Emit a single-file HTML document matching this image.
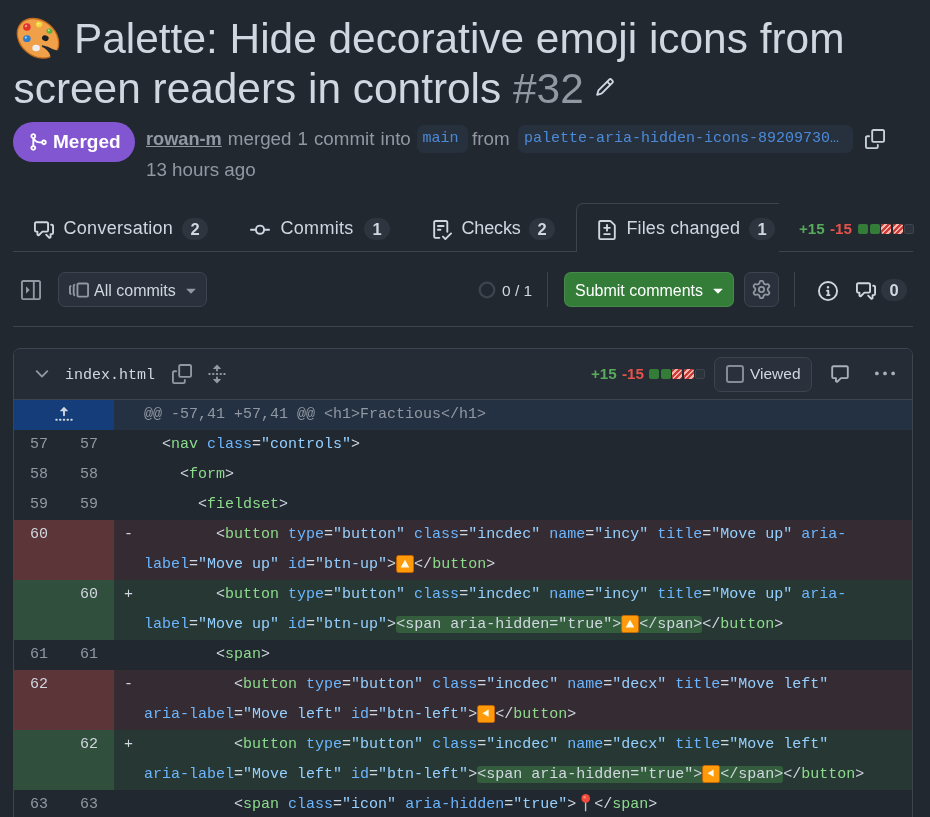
<!DOCTYPE html>
<html><head><meta charset="utf-8"><style>
*{box-sizing:border-box;margin:0;padding:0}
html,body{width:930px;height:817px;overflow:hidden;background:#212830;color:#d1d7e0;font-family:"Liberation Sans",sans-serif}
.abs{position:absolute}
#root{position:absolute;left:0;top:0;width:930px;height:817px;will-change:transform}
.counter{height:22px;border-radius:11px;background:#2f353e;font-weight:bold;font-size:16.5px;text-align:center;line-height:22px;color:#d1d7e0}
.btn{border:1px solid #3d444d;background:#2a313c;border-radius:7px}
.mono{font-family:"Liberation Mono",monospace;font-size:15px;line-height:30px;height:30px;white-space:pre;color:#d1d7e0}
.t{color:#8ddb8c}.a{color:#6cb6ff}.s{color:#96d0ff}
.hl{background:#335d3d;border-radius:3px}
</style></head><body><div id="root">
<svg class="abs" style="left:0px;top:0px" width="70" height="70" viewBox="0 0 70 70"><ellipse cx="38" cy="38.3" rx="22.6" ry="17.6" transform="rotate(40 38 38.3)" fill="#f0a048" stroke="#c06a1c" stroke-width="1.3"/><path d="M42.3 45.2 Q48 46.2 53 49.3 Q57 51 62 51 L64 64 L50 64 Q51.5 58 49.5 53.5 Q46.5 48.5 42.3 47 Q41.2 46 42.3 45.2Z" fill="#212830"/><ellipse cx="45.3" cy="38.2" rx="3.4" ry="2.8" transform="rotate(20 45.3 38.2)" fill="#1c1f24"/><circle cx="26.9" cy="27" r="3.8" fill="#e0332c"/><circle cx="26" cy="26" r="1.2" fill="#ff9a90"/><ellipse cx="39" cy="24.4" rx="3.2" ry="2.8" fill="#f3d63a"/><circle cx="38.3" cy="23.7" r="1" fill="#fff4a0"/><ellipse cx="49.5" cy="31.1" rx="3" ry="2.7" fill="#5bb03c"/><circle cx="48.8" cy="30.3" r="0.9" fill="#c8f0a0"/><ellipse cx="26.9" cy="38.7" rx="3.8" ry="3.4" fill="#2c7dd0"/><circle cx="25.8" cy="37.6" r="1.1" fill="#a8d8ff"/><ellipse cx="36.1" cy="48" rx="3.8" ry="3.2" fill="#eeeef0"/></svg>
<div class="abs" style="left:74px;top:14px;font-size:42.4px;line-height:50px;color:#d1d7e0;font-weight:normal;white-space:pre;">Palette: Hide decorative emoji icons from</div>
<div class="abs" style="left:13.5px;top:64px;font-size:42.4px;line-height:50px;color:#d1d7e0;font-weight:normal;white-space:pre;">screen readers in controls <span style="color:#9198a1">#32</span></div>
<svg class="abs" style="left:595px;top:77px" width="20" height="20" viewBox="0 0 16 16" fill="#d1d7e0"><path d="M11.013 1.427a1.75 1.75 0 0 1 2.474 0l1.086 1.086a1.75 1.75 0 0 1 0 2.474l-8.61 8.61c-.21.21-.47.364-.756.445l-3.251.93a.75.75 0 0 1-.927-.928l.929-3.25c.081-.286.235-.547.445-.758l8.61-8.61Zm.176 4.823L9.75 4.81l-6.286 6.287a.253.253 0 0 0-.064.108l-.558 1.953 1.953-.558a.253.253 0 0 0 .108-.064Zm1.238-3.763a.25.25 0 0 0-.354 0L10.811 3.75l1.439 1.44 1.263-1.263a.25.25 0 0 0 0-.354Z"/></svg>
<div class="abs" style="left:13px;top:122px;width:122px;height:40px;border-radius:20px;background:#8256d0"></div>
<svg class="abs" style="left:27.7px;top:132.3px" width="20" height="20" viewBox="0 0 16 16" fill="#ffffff"><path d="M5.45 5.154A4.25 4.25 0 0 0 9.25 7.5h1.378a2.251 2.251 0 1 1 0 1.5H9.25A5.734 5.734 0 0 1 5 7.123v3.505a2.25 2.25 0 1 1-1.5 0V5.372a2.25 2.25 0 1 1 1.95-.218ZM4.25 13.5a.75.75 0 1 0 0-1.5.75.75 0 0 0 0 1.5Zm8.5-4.5a.75.75 0 1 0 0-1.5.75.75 0 0 0 0 1.5ZM5 3.25a.75.75 0 1 0 0 .005V3.25Z"/></svg>
<div class="abs" style="left:53px;top:129.5px;font-size:19px;line-height:24px;color:#ffffff;font-weight:bold;white-space:pre;">Merged</div>
<div class="abs" style="left:146px;top:127px;font-size:18.8px;line-height:24px;color:#9198a1;font-weight:normal;white-space:pre;word-spacing:0.8px"><span style="font-weight:bold;text-decoration:underline;font-size:18.2px">rowan-m</span> merged 1 commit into</div>
<div class="abs" style="left:417px;top:125px;width:51px;height:28px;border-radius:7px;background:#27313e"></div>
<div class="abs" style="left:422.5px;top:128px;font-size:15px;line-height:22px;color:#4c8ad8;font-weight:normal;white-space:pre;font-family:'Liberation Mono',monospace">main</div>
<div class="abs" style="left:472px;top:127px;font-size:18.8px;line-height:24px;color:#9198a1;font-weight:normal;white-space:pre;">from</div>
<div class="abs" style="left:518px;top:125px;width:335px;height:28px;border-radius:7px;background:#27313e"></div>
<div class="abs" style="left:524px;top:128px;font-size:15px;line-height:22px;color:#4c8ad8;font-weight:normal;white-space:pre;font-family:'Liberation Mono',monospace">palette-aria-hidden-icons-89209730…</div>
<svg class="abs" style="left:865px;top:129px" width="20" height="20" viewBox="0 0 16 16" fill="#c9cfd7"><path d="M0 6.75C0 5.784.784 5 1.75 5h1.5a.75.75 0 0 1 0 1.5h-1.5a.25.25 0 0 0-.25.25v7.5c0 .138.112.25.25.25h7.5a.25.25 0 0 0 .25-.25v-1.5a.75.75 0 0 1 1.5 0v1.5A1.75 1.75 0 0 1 9.25 16h-7.5A1.75 1.75 0 0 1 0 14.25ZM5 1.75C5 .784 5.784 0 6.75 0h7.5C15.216 0 16 .784 16 1.75v7.5A1.75 1.75 0 0 1 14.25 11h-7.5A1.75 1.75 0 0 1 5 9.25Zm1.75-.25a.25.25 0 0 0-.25.25v7.5c0 .138.112.25.25.25h7.5a.25.25 0 0 0 .25-.25v-7.5a.25.25 0 0 0-.25-.25Z"/></svg>
<div class="abs" style="left:146px;top:158px;font-size:18.8px;line-height:24px;color:#9198a1;font-weight:normal;white-space:pre;">13 hours ago</div>
<div class="abs" style="left:13px;top:251px;width:900px;height:1px;background:#3d444d"></div>
<div class="abs" style="left:576px;top:203px;width:203px;height:49px;border-top:1px solid #3d444d;border-left:1px solid #3d444d;border-top-left-radius:7px;background:#212830"></div>
<svg class="abs" style="left:34px;top:220px" width="20" height="20" viewBox="0 0 16 16" fill="#d1d7e0"><path d="M1.75 1h8.5c.966 0 1.75.784 1.75 1.75v5.5A1.75 1.75 0 0 1 10.25 10H7.061l-2.574 2.573A1.458 1.458 0 0 1 2 11.543V10h-.25A1.75 1.75 0 0 1 0 8.25v-5.5C0 1.784.784 1 1.75 1ZM1.5 2.75v5.5c0 .138.112.25.25.25h1a.75.75 0 0 1 .75.75v2.19l2.72-2.72a.749.749 0 0 1 .53-.22h3.5a.25.25 0 0 0 .25-.25v-5.5a.25.25 0 0 0-.25-.25h-8.5a.25.25 0 0 0-.25.25Zm13 2a.25.25 0 0 0-.25-.25h-.5a.75.75 0 0 1 0-1.5h.5c.966 0 1.75.784 1.75 1.75v5.5A1.75 1.75 0 0 1 14.25 12H14v1.543a1.458 1.458 0 0 1-2.487 1.03L9.22 12.28a.749.749 0 0 1 .326-1.275.749.749 0 0 1 .734.215l2.22 2.22v-2.19a.75.75 0 0 1 .75-.75h1a.25.25 0 0 0 .25-.25Z"/></svg>
<div class="abs" style="left:63.5px;top:216px;font-size:18px;line-height:24px;color:#d1d7e0;font-weight:normal;white-space:pre;letter-spacing:0.3px">Conversation</div>
<div class="abs counter" style="left:182px;top:218px;width:26px">2</div>
<svg class="abs" style="left:250px;top:220px" width="20" height="20" viewBox="0 0 16 16" fill="#d1d7e0"><path d="M11.93 8.5a4.002 4.002 0 0 1-7.86 0H.75a.75.75 0 0 1 0-1.5h3.32a4.002 4.002 0 0 1 7.86 0h3.32a.75.75 0 0 1 0 1.5Zm-1.43-.75a2.5 2.5 0 1 0-5 0 2.5 2.5 0 0 0 5 0Z"/></svg>
<div class="abs" style="left:280.5px;top:216px;font-size:18px;line-height:24px;color:#d1d7e0;font-weight:normal;white-space:pre;letter-spacing:0.3px">Commits</div>
<div class="abs counter" style="left:364px;top:218px;width:26px">1</div>
<svg class="abs" style="left:432px;top:220px" width="20" height="20" viewBox="0 0 16 16" fill="#d1d7e0"><path d="M2.5 1.75v11.5c0 .138.112.25.25.25h3.17a.75.75 0 0 1 0 1.5H2.75A1.75 1.75 0 0 1 1 13.25V1.75C1 .784 1.784 0 2.75 0h8.5C12.216 0 13 .784 13 1.75v7.736a.75.75 0 0 1-1.5 0V1.75a.25.25 0 0 0-.25-.25h-8.5a.25.25 0 0 0-.25.25Zm13.274 9.537v-.001l-4.557 4.45a.75.75 0 0 1-1.055-.008l-1.943-1.95a.75.75 0 0 1 1.062-1.058l1.419 1.425 4.026-3.932a.75.75 0 1 1 1.048 1.074ZM4.75 4h4.5a.75.75 0 0 1 0 1.5h-4.5a.75.75 0 0 1 0-1.5ZM4 7.75A.75.75 0 0 1 4.75 7h2a.75.75 0 0 1 0 1.5h-2A.75.75 0 0 1 4 7.75Z"/></svg>
<div class="abs" style="left:461.5px;top:216px;font-size:18px;line-height:24px;color:#d1d7e0;font-weight:normal;white-space:pre;letter-spacing:-0.15px">Checks</div>
<div class="abs counter" style="left:529px;top:218px;width:26px">2</div>
<svg class="abs" style="left:597px;top:220px" width="20" height="20" viewBox="0 0 16 16" fill="#d1d7e0"><path d="M1 1.75C1 .784 1.784 0 2.75 0h7.586c.464 0 .909.184 1.237.513l2.914 2.914c.329.328.513.773.513 1.237v9.586A1.75 1.75 0 0 1 13.25 16H2.75A1.75 1.75 0 0 1 1 14.25Zm1.75-.25a.25.25 0 0 0-.25.25v12.5c0 .138.112.25.25.25h10.5a.25.25 0 0 0 .25-.25V4.664a.25.25 0 0 0-.073-.177l-2.914-2.914a.25.25 0 0 0-.177-.073ZM8 3.25a.75.75 0 0 1 .75.75v1.5h1.5a.75.75 0 0 1 0 1.5h-1.5v1.5a.75.75 0 0 1-1.5 0V7h-1.5a.75.75 0 0 1 0-1.5h1.5V4A.75.75 0 0 1 8 3.25Zm-3 8a.75.75 0 0 1 .75-.75h4.5a.75.75 0 0 1 0 1.5h-4.5a.75.75 0 0 1-.75-.75Z"/></svg>
<div class="abs" style="left:626.5px;top:216px;font-size:18px;line-height:24px;color:#d1d7e0;font-weight:normal;white-space:pre;letter-spacing:0.12px">Files changed</div>
<div class="abs counter" style="left:749px;top:218px;width:26px">1</div>
<div class="abs" style="left:799px;top:219px;font-size:15.2px;line-height:20px;color:#d1d7e0;font-weight:normal;white-space:pre;word-spacing:1px"><b style="color:#57ab5a">+15</b> <b style="color:#e5534b">-15</b></div>
<div class="abs" style="left:858.0px;top:224px;width:10px;height:10px;border-radius:2px;background:#347d39"></div><div class="abs" style="left:869.5px;top:224px;width:10px;height:10px;border-radius:2px;background:#347d39"></div><div class="abs" style="left:881.0px;top:224px;width:10px;height:10px;border-radius:2px;background:repeating-linear-gradient(-45deg,#c93c37 0px,#c93c37 2px,#f5b3ab 2px,#f5b3ab 3.8px)"></div><div class="abs" style="left:892.5px;top:224px;width:10px;height:10px;border-radius:2px;background:repeating-linear-gradient(-45deg,#c93c37 0px,#c93c37 2px,#f5b3ab 2px,#f5b3ab 3.8px)"></div><div class="abs" style="left:904.0px;top:224px;width:10px;height:10px;border-radius:2px;background:#2d333b;border:1px solid #3d444d"></div>
<svg class="abs" style="left:21px;top:280px" width="20" height="20" viewBox="0 0 16 16" fill="#9198a1"><path d="M6.823 7.823a.25.25 0 0 1 0 .354l-2.396 2.396A.25.25 0 0 1 4 10.396V5.604a.25.25 0 0 1 .427-.177ZM1.75 0h12.5C15.216 0 16 .784 16 1.75v12.5A1.75 1.75 0 0 1 14.25 16H1.75A1.75 1.75 0 0 1 0 14.25V1.75C0 .784.784 0 1.75 0ZM1.5 1.75v12.5c0 .138.112.25.25.25H9.5v-13H1.75a.25.25 0 0 0-.25.25ZM11 14.5h3.25a.25.25 0 0 0 .25-.25V1.75a.25.25 0 0 0-.25-.25H11Z"/></svg>
<div class="abs btn" style="left:58px;top:272px;width:149px;height:35px"></div>
<svg class="abs" style="left:69px;top:280px" width="20" height="20" viewBox="0 0 16 16" fill="#9198a1"><path d="M7.75 14A1.75 1.75 0 0 1 6 12.25v-8.5C6 2.784 6.784 2 7.75 2h6.5c.966 0 1.75.784 1.75 1.75v8.5A1.75 1.75 0 0 1 14.25 14Zm-.25-1.75c0 .138.112.25.25.25h6.5a.25.25 0 0 0 .25-.25v-8.5a.25.25 0 0 0-.25-.25h-6.5a.25.25 0 0 0-.25.25ZM4.9 3.508a.75.75 0 0 1-.274 1.025.249.249 0 0 0-.126.217v6.5c0 .09.048.173.126.217a.75.75 0 0 1-.752 1.298A1.75 1.75 0 0 1 3 11.25v-6.5c0-.649.353-1.214.874-1.516a.75.75 0 0 1 1.025.274ZM1.625 5.533h.001a.249.249 0 0 0-.126.217v4.5c0 .09.048.173.126.217a.75.75 0 0 1-.752 1.298A1.748 1.748 0 0 1 0 10.25v-4.5a1.748 1.748 0 0 1 .873-1.516.75.75 0 1 1 .752 1.299Z"/></svg>
<div class="abs" style="left:94px;top:279.5px;font-size:16px;line-height:22px;color:#d1d7e0;font-weight:normal;white-space:pre;">All commits</div>
<svg class="abs" style="left:181px;top:280px" width="20" height="20" viewBox="0 0 16 16" fill="#9198a1"><path d="m4.427 7.427 3.396 3.396a.25.25 0 0 0 .354 0l3.396-3.396A.25.25 0 0 0 11.396 7H4.604a.25.25 0 0 0-.177.427Z"/></svg>
<svg class="abs" style="left:477.8px;top:280.6px" width="18" height="18" viewBox="0 0 18 18"><circle cx="9" cy="9" r="7.3" fill="none" stroke="#3d444d" stroke-width="2.3"/></svg>
<div class="abs" style="left:502px;top:280px;font-size:15.5px;line-height:22px;color:#d1d7e0;font-weight:normal;white-space:pre;">0 / 1</div>
<div class="abs" style="left:547px;top:272px;width:1px;height:35px;background:#3d444d"></div>
<div class="abs" style="left:564px;top:272px;width:170px;height:35px;border-radius:7px;background:#347d39;border:1px solid rgba(255,255,255,0.1)"></div>
<div class="abs" style="left:575px;top:280px;font-size:16px;line-height:22px;color:#ffffff;font-weight:normal;white-space:pre;">Submit comments</div>
<svg class="abs" style="left:708px;top:280px" width="20" height="20" viewBox="0 0 16 16" fill="#ffffff"><path d="m4.427 7.427 3.396 3.396a.25.25 0 0 0 .354 0l3.396-3.396A.25.25 0 0 0 11.396 7H4.604a.25.25 0 0 0-.177.427Z"/></svg>
<div class="abs btn" style="left:744px;top:272px;width:35px;height:35px"></div>
<svg class="abs" style="left:752px;top:280px" width="19" height="19" viewBox="0 0 16 16" fill="#9198a1"><path d="M8 0a8.2 8.2 0 0 1 .701.031C9.444.095 9.99.645 10.16 1.29l.288 1.107c.018.066.079.158.212.224.231.114.454.243.668.386.123.082.233.09.299.071l1.103-.303c.644-.176 1.392.021 1.82.63.27.385.506.792.704 1.218.315.675.111 1.422-.364 1.891l-.814.806c-.049.048-.098.147-.088.294.016.257.016.515 0 .772-.01.147.038.246.088.294l.814.806c.475.469.679 1.216.364 1.891a7.977 7.977 0 0 1-.704 1.217c-.428.61-1.176.807-1.82.63l-1.102-.302c-.067-.019-.177-.011-.3.071a5.909 5.909 0 0 1-.668.386c-.133.066-.194.158-.211.224l-.29 1.106c-.168.646-.715 1.196-1.458 1.26a8.006 8.006 0 0 1-1.402 0c-.743-.064-1.289-.614-1.458-1.26l-.289-1.106c-.018-.066-.079-.158-.212-.224a5.738 5.738 0 0 1-.668-.386c-.123-.082-.233-.09-.299-.071l-1.103.303c-.644.176-1.392-.021-1.82-.63a8.12 8.12 0 0 1-.704-1.218c-.315-.675-.111-1.422.363-1.891l.815-.806c.05-.048.098-.147.088-.294a6.214 6.214 0 0 1 0-.772c.01-.147-.038-.246-.088-.294l-.815-.806C.635 6.045.431 5.298.746 4.623a7.92 7.92 0 0 1 .704-1.217c.428-.61 1.176-.807 1.820-.63l1.102.302c.067.019.177.011.3-.071.214-.143.437-.272.668-.386.133-.066.194-.158.211-.224l.29-1.106C6.009.645 6.556.095 7.299.03 7.53.01 7.764 0 8 0Zm-.571 1.525c-.036.003-.108.036-.137.146l-.289 1.105c-.147.561-.549.967-.998 1.189-.173.086-.34.183-.5.29-.417.278-.97.423-1.529.27l-1.103-.303c-.109-.03-.175.016-.195.045-.22.312-.412.644-.573.99-.014.031-.021.11.059.19l.815.806c.411.406.562.957.53 1.456a4.709 4.709 0 0 0 0 .582c.032.499-.119 1.05-.53 1.456l-.815.806c-.081.08-.073.159-.059.19.162.346.353.677.573.989.02.03.085.076.195.046l1.102-.303c.56-.153 1.113-.008 1.53.27.161.107.328.204.501.29.447.222.85.629.997 1.189l.289 1.105c.029.109.101.143.137.146a6.6 6.6 0 0 0 1.142 0c.036-.003.108-.036.137-.146l.289-1.105c.147-.561.549-.967.998-1.189.173-.086.34-.183.5-.29.417-.278.97-.423 1.529-.27l1.103.303c.109.029.175-.016.195-.045.22-.313.411-.644.573-.99.014-.031.021-.11-.059-.19l-.815-.806c-.411-.406-.562-.957-.53-1.456a4.709 4.709 0 0 0 0-.582c-.032-.499.119-1.05.53-1.456l.815-.806c.081-.08.073-.159.059-.19a6.464 6.464 0 0 0-.573-.989c-.02-.03-.085-.076-.195-.046l-1.102.303c-.56.153-1.113.008-1.53-.27a4.44 4.44 0 0 0-.501-.29c-.447-.222-.85-.629-.997-1.189l-.289-1.105c-.029-.11-.101-.143-.137-.146a6.6 6.6 0 0 0-1.142 0ZM11 8a3 3 0 1 1-6 0 3 3 0 0 1 6 0ZM9.5 8a1.5 1.5 0 1 0-3.001.001A1.5 1.5 0 0 0 9.5 8Z"/></svg>
<div class="abs" style="left:794px;top:272px;width:1px;height:35px;background:#3d444d"></div>
<svg class="abs" style="left:818px;top:281px" width="20" height="20" viewBox="0 0 16 16" fill="#d1d7e0"><path d="M0 8a8 8 0 1 1 16 0A8 8 0 0 1 0 8Zm8-6.5a6.5 6.5 0 1 0 0 13 6.5 6.5 0 0 0 0-13ZM6.5 7.75A.75.75 0 0 1 7.25 7h1a.75.75 0 0 1 .75.75v2.75h.25a.75.75 0 0 1 0 1.5h-2a.75.75 0 0 1 0-1.5h.25v-2h-.25a.75.75 0 0 1-.75-.75ZM8 6a1 1 0 1 1 0-2 1 1 0 0 1 0 2Z"/></svg>
<svg class="abs" style="left:856px;top:281px" width="20" height="20" viewBox="0 0 16 16" fill="#d1d7e0"><path d="M1.75 1h8.5c.966 0 1.75.784 1.75 1.75v5.5A1.75 1.75 0 0 1 10.25 10H7.061l-2.574 2.573A1.458 1.458 0 0 1 2 11.543V10h-.25A1.75 1.75 0 0 1 0 8.25v-5.5C0 1.784.784 1 1.75 1ZM1.5 2.75v5.5c0 .138.112.25.25.25h1a.75.75 0 0 1 .75.75v2.19l2.72-2.72a.749.749 0 0 1 .53-.22h3.5a.25.25 0 0 0 .25-.25v-5.5a.25.25 0 0 0-.25-.25h-8.5a.25.25 0 0 0-.25.25Zm13 2a.25.25 0 0 0-.25-.25h-.5a.75.75 0 0 1 0-1.5h.5c.966 0 1.75.784 1.75 1.75v5.5A1.75 1.75 0 0 1 14.25 12H14v1.543a1.458 1.458 0 0 1-2.487 1.03L9.22 12.28a.749.749 0 0 1 .326-1.275.749.749 0 0 1 .734.215l2.22 2.22v-2.19a.75.75 0 0 1 .75-.75h1a.25.25 0 0 0 .25-.25Z"/></svg>
<div class="abs counter" style="left:881px;top:279px;width:26px">0</div>
<div class="abs" style="left:13px;top:326px;width:900px;height:1px;background:#3d444d"></div>
<div class="abs" style="left:13px;top:348px;width:900px;height:480px;border:1px solid #3d444d;border-radius:7px 7px 0 0;background:#212830"></div>
<div class="abs" style="left:14px;top:349px;width:898px;height:51px;background:#262c36;border-radius:6px 6px 0 0;border-bottom:1px solid #3d444d"></div>
<svg class="abs" style="left:32px;top:364px" width="20" height="20" viewBox="0 0 16 16" fill="#9198a1"><path d="M12.78 5.22a.749.749 0 0 1 0 1.06l-4.25 4.25a.749.749 0 0 1-1.06 0L3.22 6.28a.749.749 0 1 1 1.06-1.06L8 8.94l3.72-3.72a.749.749 0 0 1 1.06 0Z"/></svg>
<div class="abs" style="left:65px;top:365px;font-size:15px;line-height:22px;color:#d1d7e0;font-weight:normal;white-space:pre;font-family:'Liberation Mono',monospace">index.html</div>
<svg class="abs" style="left:172px;top:364px" width="20" height="20" viewBox="0 0 16 16" fill="#9198a1"><path d="M0 6.75C0 5.784.784 5 1.75 5h1.5a.75.75 0 0 1 0 1.5h-1.5a.25.25 0 0 0-.25.25v7.5c0 .138.112.25.25.25h7.5a.25.25 0 0 0 .25-.25v-1.5a.75.75 0 0 1 1.5 0v1.5A1.75 1.75 0 0 1 9.25 16h-7.5A1.75 1.75 0 0 1 0 14.25ZM5 1.75C5 .784 5.784 0 6.75 0h7.5C15.216 0 16 .784 16 1.75v7.5A1.75 1.75 0 0 1 14.25 11h-7.5A1.75 1.75 0 0 1 5 9.25Zm1.75-.25a.25.25 0 0 0-.25.25v7.5c0 .138.112.25.25.25h7.5a.25.25 0 0 0 .25-.25v-7.5a.25.25 0 0 0-.25-.25Z"/></svg>
<svg class="abs" style="left:207px;top:364px" width="20" height="20" viewBox="0 0 16 16" fill="#9198a1"><path d="m8.177.677 2.896 2.896a.25.25 0 0 1-.177.427H8.75v1.25a.75.75 0 0 1-1.5 0V4H5.104a.25.25 0 0 1-.177-.427L7.823.677a.25.25 0 0 1 .354 0ZM7.25 10.75a.75.75 0 0 1 1.5 0V12h2.146a.25.25 0 0 1 .177.427l-2.896 2.896a.25.25 0 0 1-.354 0l-2.896-2.896A.25.25 0 0 1 5.104 12H7.25v-1.25Zm-5-2a.75.75 0 0 0 0-1.5h-.5a.75.75 0 0 0 0 1.5h.5ZM6 8a.75.75 0 0 1-.75.75h-.5a.75.75 0 0 1 0-1.5h.5A.75.75 0 0 1 6 8Zm2.25.75a.75.75 0 0 0 0-1.5h-.5a.75.75 0 0 0 0 1.5h.5ZM12 8a.75.75 0 0 1-.75.75h-.5a.75.75 0 0 1 0-1.5h.5A.75.75 0 0 1 12 8Zm2.25.75a.75.75 0 0 0 0-1.5h-.5a.75.75 0 0 0 0 1.5h.5Z"/></svg>
<div class="abs" style="left:591px;top:364px;font-size:15.2px;line-height:20px;color:#d1d7e0;font-weight:normal;white-space:pre;word-spacing:1px"><b style="color:#57ab5a">+15</b> <b style="color:#e5534b">-15</b></div>
<div class="abs" style="left:649.0px;top:369px;width:10px;height:10px;border-radius:2px;background:#347d39"></div><div class="abs" style="left:660.5px;top:369px;width:10px;height:10px;border-radius:2px;background:#347d39"></div><div class="abs" style="left:672.0px;top:369px;width:10px;height:10px;border-radius:2px;background:repeating-linear-gradient(-45deg,#c93c37 0px,#c93c37 2px,#f5b3ab 2px,#f5b3ab 3.8px)"></div><div class="abs" style="left:683.5px;top:369px;width:10px;height:10px;border-radius:2px;background:repeating-linear-gradient(-45deg,#c93c37 0px,#c93c37 2px,#f5b3ab 2px,#f5b3ab 3.8px)"></div><div class="abs" style="left:695.0px;top:369px;width:10px;height:10px;border-radius:2px;background:#2d333b;border:1px solid #3d444d"></div>
<div class="abs btn" style="left:714px;top:357px;width:98px;height:35px"></div>
<div class="abs" style="left:726px;top:365px;width:18px;height:18px;border:2px solid #858c96;border-radius:3px"></div>
<div class="abs" style="left:750px;top:363px;font-size:15.5px;line-height:22px;color:#d1d7e0;font-weight:normal;white-space:pre;">Viewed</div>
<svg class="abs" style="left:830px;top:364px" width="20" height="20" viewBox="0 0 16 16" fill="#a9b0b8"><path d="M1 2.75C1 1.784 1.784 1 2.75 1h10.5c.966 0 1.75.784 1.75 1.75v7.5A1.75 1.75 0 0 1 13.25 12H9.06l-2.573 2.573A1.458 1.458 0 0 1 4 13.543V12H2.75A1.75 1.75 0 0 1 1 10.25Zm1.75-.25a.25.25 0 0 0-.25.25v7.5c0 .138.112.25.25.25h2a.75.75 0 0 1 .75.75v2.19l2.72-2.72a.749.749 0 0 1 .53-.22h4.5a.25.25 0 0 0 .25-.25v-7.5a.25.25 0 0 0-.25-.25Z"/></svg>
<svg class="abs" style="left:875px;top:364px" width="20" height="20" viewBox="0 0 16 16" fill="#a9b0b8"><path d="M8 9a1.5 1.5 0 1 0 0-3 1.5 1.5 0 0 0 0 3ZM1.5 9a1.5 1.5 0 1 0 0-3 1.5 1.5 0 0 0 0 3Zm13 0a1.5 1.5 0 1 0 0-3 1.5 1.5 0 0 0 0 3Z"/></svg>
<div class="abs" style="left:14px;top:400px;width:898px;height:30px;background:#243142"></div>
<div class="abs" style="left:14px;top:400px;width:100px;height:30px;background:#143d79"></div>
<svg class="abs" style="left:53.8px;top:405.1px" width="20" height="20" viewBox="0 0 16 16" fill="#d1d7e0"><path d="M7.823 1.677 4.927 4.573A.25.25 0 0 0 5.104 5H7.25v3.236a.75.75 0 1 0 1.5 0V5h2.146a.25.25 0 0 0 .177-.427L8.177 1.677a.25.25 0 0 0-.354 0ZM13.75 11a.75.75 0 0 0 0 1.5h.5a.75.75 0 0 0 0-1.5h-.5Zm-3.75.75a.75.75 0 0 1 .75-.75h.5a.75.75 0 0 1 0 1.5h-.5a.75.75 0 0 1-.75-.75ZM7.75 11a.75.75 0 0 0 0 1.5h.5a.75.75 0 0 0 0-1.5h-.5ZM4 11.75a.75.75 0 0 1 .75-.75h.5a.75.75 0 0 1 0 1.5h-.5a.75.75 0 0 1-.75-.75ZM1.75 11a.75.75 0 0 0 0 1.5h.5a.75.75 0 0 0 0-1.5h-.5Z"/></svg>
<div class="abs mono" style="left:144px;top:400px;color:#9198a1">@@ -57,41 +57,41 @@ &lt;h1&gt;Fractious&lt;/h1&gt;</div>
<div class="abs" style="left:14px;top:430px;width:898px;height:30px;background:#212830"></div><div class="abs mono" style="left:14px;top:430px;width:50px;padding-right:16px;text-align:right;color:#9198a1">57</div><div class="abs mono" style="left:64px;top:430px;width:50px;padding-right:16px;text-align:right;color:#9198a1">57</div><div class="abs mono" style="left:144px;top:430px">  &lt;<span class="t">nav</span> <span class="a">class</span>=<span class="s">"controls"</span>&gt;</div>
<div class="abs" style="left:14px;top:460px;width:898px;height:30px;background:#212830"></div><div class="abs mono" style="left:14px;top:460px;width:50px;padding-right:16px;text-align:right;color:#9198a1">58</div><div class="abs mono" style="left:64px;top:460px;width:50px;padding-right:16px;text-align:right;color:#9198a1">58</div><div class="abs mono" style="left:144px;top:460px">    &lt;<span class="t">form</span>&gt;</div>
<div class="abs" style="left:14px;top:490px;width:898px;height:30px;background:#212830"></div><div class="abs mono" style="left:14px;top:490px;width:50px;padding-right:16px;text-align:right;color:#9198a1">59</div><div class="abs mono" style="left:64px;top:490px;width:50px;padding-right:16px;text-align:right;color:#9198a1">59</div><div class="abs mono" style="left:144px;top:490px">      &lt;<span class="t">fieldset</span>&gt;</div>
<div class="abs" style="left:14px;top:520px;width:898px;height:60px;background:#352c33"></div><div class="abs" style="left:14px;top:520px;width:100px;height:60px;background:#5c3538"></div><div class="abs mono" style="left:14px;top:520px;width:50px;padding-right:16px;text-align:right;color:#d1d7e0">60</div><div class="abs mono" style="left:124px;top:520px">-</div><div class="abs mono" style="left:144px;top:520px">        &lt;<span class="t">button</span> <span class="a">type</span>=<span class="s">"button"</span> <span class="a">class</span>=<span class="s">"incdec"</span> <span class="a">name</span>=<span class="s">"incy"</span> <span class="a">title</span>=<span class="s">"Move up"</span> <span class="a">aria-</span></div><div class="abs mono" style="left:144px;top:550px"><span class="a">label</span>=<span class="s">"Move up"</span> <span class="a">id</span>=<span class="s">"btn-up"</span>&gt;  &lt;/<span class="t">button</span>&gt;</div>
<svg class="abs" style="left:395.5px;top:555px" width="18" height="18" viewBox="0 0 18 18"><rect x="0.6" y="0.4" width="17" height="17.2" rx="2.2" fill="#ff9b0a" stroke="#c86400" stroke-width="0.9"/><path d="M9 4.8 L13.3 12.6 H4.7 Z" fill="#fffbe8"/></svg>
<div class="abs" style="left:14px;top:580px;width:898px;height:60px;background:#273834"></div><div class="abs" style="left:14px;top:580px;width:100px;height:60px;background:#314f3d"></div><div class="abs mono" style="left:64px;top:580px;width:50px;padding-right:16px;text-align:right;color:#d1d7e0">60</div><div class="abs mono" style="left:124px;top:580px">+</div><div class="abs mono" style="left:144px;top:580px">        &lt;<span class="t">button</span> <span class="a">type</span>=<span class="s">"button"</span> <span class="a">class</span>=<span class="s">"incdec"</span> <span class="a">name</span>=<span class="s">"incy"</span> <span class="a">title</span>=<span class="s">"Move up"</span> <span class="a">aria-</span></div><div class="abs mono" style="left:144px;top:610px"><span class="a">label</span>=<span class="s">"Move up"</span> <span class="a">id</span>=<span class="s">"btn-up"</span>&gt;<span class="hl">&lt;span aria-hidden="true"&gt;  &lt;/span&gt;</span>&lt;/<span class="t">button</span>&gt;</div>
<svg class="abs" style="left:620.5px;top:615px" width="18" height="18" viewBox="0 0 18 18"><rect x="0.6" y="0.4" width="17" height="17.2" rx="2.2" fill="#ff9b0a" stroke="#c86400" stroke-width="0.9"/><path d="M9 4.8 L13.3 12.6 H4.7 Z" fill="#fffbe8"/></svg>
<div class="abs" style="left:14px;top:640px;width:898px;height:30px;background:#212830"></div><div class="abs mono" style="left:14px;top:640px;width:50px;padding-right:16px;text-align:right;color:#9198a1">61</div><div class="abs mono" style="left:64px;top:640px;width:50px;padding-right:16px;text-align:right;color:#9198a1">61</div><div class="abs mono" style="left:144px;top:640px">        &lt;<span class="t">span</span>&gt;</div>
<div class="abs" style="left:14px;top:670px;width:898px;height:60px;background:#352c33"></div><div class="abs" style="left:14px;top:670px;width:100px;height:60px;background:#5c3538"></div><div class="abs mono" style="left:14px;top:670px;width:50px;padding-right:16px;text-align:right;color:#d1d7e0">62</div><div class="abs mono" style="left:124px;top:670px">-</div><div class="abs mono" style="left:144px;top:670px">          &lt;<span class="t">button</span> <span class="a">type</span>=<span class="s">"button"</span> <span class="a">class</span>=<span class="s">"incdec"</span> <span class="a">name</span>=<span class="s">"decx"</span> <span class="a">title</span>=<span class="s">"Move left"</span></div><div class="abs mono" style="left:144px;top:700px"><span class="a">aria-label</span>=<span class="s">"Move left"</span> <span class="a">id</span>=<span class="s">"btn-left"</span>&gt;  &lt;/<span class="t">button</span>&gt;</div>
<svg class="abs" style="left:476.5px;top:705px" width="18" height="18" viewBox="0 0 18 18"><rect x="0.6" y="0.4" width="17" height="17.2" rx="2.2" fill="#ff9b0a" stroke="#c86400" stroke-width="0.9"/><path d="M5.4 8.3 L11.6 4.6 V11.8 Z" fill="#fffbe8"/></svg>
<div class="abs" style="left:14px;top:730px;width:898px;height:60px;background:#273834"></div><div class="abs" style="left:14px;top:730px;width:100px;height:60px;background:#314f3d"></div><div class="abs mono" style="left:64px;top:730px;width:50px;padding-right:16px;text-align:right;color:#d1d7e0">62</div><div class="abs mono" style="left:124px;top:730px">+</div><div class="abs mono" style="left:144px;top:730px">          &lt;<span class="t">button</span> <span class="a">type</span>=<span class="s">"button"</span> <span class="a">class</span>=<span class="s">"incdec"</span> <span class="a">name</span>=<span class="s">"decx"</span> <span class="a">title</span>=<span class="s">"Move left"</span></div><div class="abs mono" style="left:144px;top:760px"><span class="a">aria-label</span>=<span class="s">"Move left"</span> <span class="a">id</span>=<span class="s">"btn-left"</span>&gt;<span class="hl">&lt;span aria-hidden="true"&gt;  &lt;/span&gt;</span>&lt;/<span class="t">button</span>&gt;</div>
<svg class="abs" style="left:701.5px;top:765px" width="18" height="18" viewBox="0 0 18 18"><rect x="0.6" y="0.4" width="17" height="17.2" rx="2.2" fill="#ff9b0a" stroke="#c86400" stroke-width="0.9"/><path d="M5.4 8.3 L11.6 4.6 V11.8 Z" fill="#fffbe8"/></svg>
<div class="abs" style="left:14px;top:790px;width:898px;height:30px;background:#212830"></div><div class="abs mono" style="left:14px;top:790px;width:50px;padding-right:16px;text-align:right;color:#9198a1">63</div><div class="abs mono" style="left:64px;top:790px;width:50px;padding-right:16px;text-align:right;color:#9198a1">63</div><div class="abs mono" style="left:144px;top:790px">          &lt;<span class="t">span</span> <span class="a">class</span>=<span class="s">"icon"</span> <span class="a">aria-hidden</span>=<span class="s">"true"</span>&gt;  &lt;/<span class="t">span</span>&gt;</div>
<svg class="abs" style="left:576px;top:792px" width="20" height="22" viewBox="0 0 20 22"><path d="M9.6 9 L9.6 18.8" stroke="#b4c4c4" stroke-width="1.4" stroke-linecap="round"/><circle cx="9.7" cy="6.4" r="4.3" fill="#ef4a3c"/><circle cx="8.6" cy="5.3" r="1.3" fill="#ff8a78"/></svg>
</div></body></html>
